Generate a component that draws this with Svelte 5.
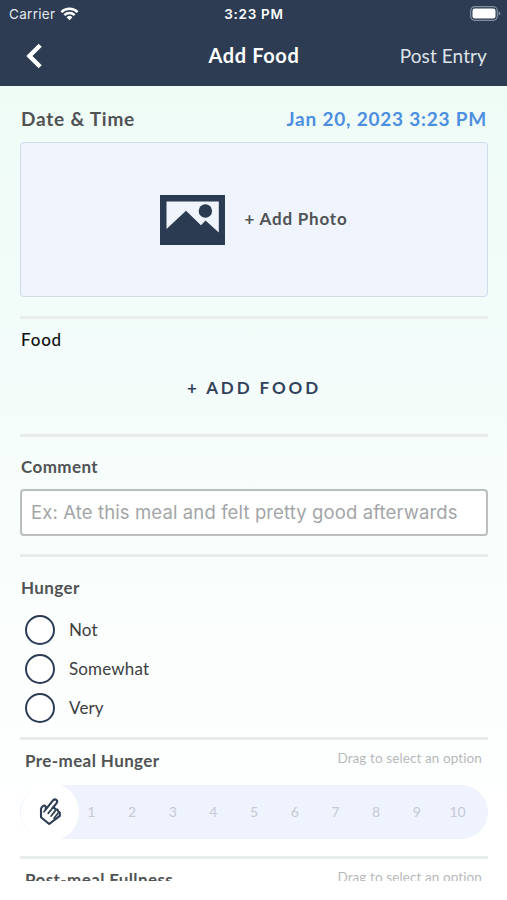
<script lang="ts">
	const hungerOptions = ['Not', 'Somewhat', 'Very'];
	const levels = Array.from({ length: 10 }, (_, i) => i + 1);

	let hunger = $state('');
	let comment = $state('');
</script>

<div class="screen">
	<header>
		<div class="status">
			<div class="carrier">
				<span>Carrier</span>
				<svg width="19" height="14" viewBox="0 0 20 15" fill="none" stroke="#fff" stroke-width="2.7">
					<path d="M1.3 5.4a12.3 12.3 0 0 1 17.4 0" />
					<path d="M4.5 8.7a7.8 7.8 0 0 1 11 0" />
					<path d="M10 14.2 6.9 11a4.4 4.4 0 0 1 6.2 0z" fill="#fff" stroke="none" />
				</svg>
			</div>
			<span class="clock">3:23 PM</span>
			<svg class="battery" width="31" height="15" viewBox="0 0 31 15">
				<rect x="0.7" y="0.7" width="26.6" height="13.6" rx="4" fill="none" stroke="#8490a0" stroke-width="1.2" />
				<rect x="2.5" y="2.5" width="23" height="10" rx="2.2" fill="#fff" />
				<path d="M28.6 5.2q1.7.8 1.7 2.3t-1.7 2.3z" fill="#8490a0" />
			</svg>
		</div>
		<nav>
			<button class="back" aria-label="Back">
				<svg width="18" height="26" viewBox="0 0 18 26" fill="none" stroke="#fff" stroke-width="4.4">
					<path d="M15.2 2.2 4.4 13l10.8 10.8" />
				</svg>
			</button>
			<h1>Add Food</h1>
			<button class="post">Post Entry</button>
		</nav>
	</header>

	<main>
		<section class="date">
			<h2>Date &amp; Time</h2>
			<span class="when">Jan 20, 2023 3:23 PM</span>
		</section>

		<button class="photo">
			<svg width="65" height="50" viewBox="0 0 65 50">
				<path d="M0 0h65v50H0z" fill="#2b3b52" />
				<path d="M6.5 6.5h52.3v31L45.5 25.4 41 30.3 26 15.8 6.5 34z" fill="#eff4fd" />
				<circle cx="45.4" cy="16" r="6.7" fill="#2b3b52" />
			</svg>
			<span>+ Add Photo</span>
		</button>

		<section class="food">
			<h3>Food</h3>
			<button class="add-food">+ ADD FOOD</button>
		</section>

		<section class="comment">
			<h3>Comment</h3>
			<input bind:value={comment} placeholder="Ex: Ate this meal and felt pretty good afterwards" />
		</section>

		<section class="hunger">
			<h3>Hunger</h3>
			{#each hungerOptions as option}
				<label>
					<input type="radio" name="hunger" value={option} bind:group={hunger} />
					<span>{option}</span>
				</label>
			{/each}
		</section>

		<section class="scale">
			<div class="scale-head">
				<h3>Pre-meal Hunger</h3>
				<span class="hint">Drag to select an option</span>
			</div>
			<div class="track">
				<div class="thumb">
					<svg width="24" height="30" viewBox="0 0 24 30" fill="none" stroke="#2b3b52" stroke-width="2.1" stroke-linejoin="round" stroke-linecap="round">
						<path d="M7.8 12.3 15.2 3.2c2-2 5 .2 3.6 2.6L14.6 11l1.6-.2 1.5 1.4 1.7.4.8 1.7 1.6 1.2v3.4l-10.6 8.1-8.2-6.8V12.3c0-1.6 1-2.6 2.2-3.4 1.2-.8 2.6-.2 2.6 1.3z" />
						<path d="m14.6 11-4.4 5.4M17.6 13.4l-4.5 5.6M20 16.2l-4 5M7.8 12.3 6 14.8" stroke-width="1.7" />
					</svg>
				</div>
				<div class="levels">
					{#each levels as level}
						<span>{level}</span>
					{/each}
				</div>
			</div>
		</section>

		<section class="scale">
			<div class="scale-head">
				<h3>Post-meal Fullness</h3>
				<span class="hint">Drag to select an option</span>
			</div>
		</section>
	</main>
</div>

<style>
	:global(body) {
		background: #fff;
	}

	.screen {
		height: 900px;
		overflow: hidden;
		box-sizing: border-box;
		font-family: Lato, 'Open Sans', sans-serif;
		font-variant-ligatures: none;
		color: #505354;
	}

	button {
		border: 0;
		padding: 0;
		background: none;
		font: inherit;
		font-variant-ligatures: none;
		color: inherit;
		cursor: pointer;
	}

	h1,
	h2,
	h3 {
		margin: 0;
		white-space: nowrap;
	}

	header {
		height: 86px;
		background: #2d3c52;
		color: #fff;
	}

	.status {
		display: grid;
		grid-template-columns: 1fr auto 1fr;
		align-items: center;
		height: 27px;
		padding: 0 6px 0 9px;
		font-family: Inter, sans-serif;
		font-size: 13.5px;
	}

	.carrier {
		display: flex;
		align-items: center;
		gap: 5px;
		color: #e4e9ef;
		letter-spacing: 0.3px;
	}

	.clock {
		padding-right: 2px;
		font-weight: 600;
		font-size: 13.5px;
		letter-spacing: 0.7px;
	}

	.battery {
		justify-self: end;
	}

	nav {
		display: grid;
		grid-template-columns: 1fr auto 1fr;
		align-items: center;
		height: 58px;
		padding: 0 20px 0 25px;
	}

	.back {
		display: flex;
	}

	h1 {
		padding: 0 4px 2px 0;
		font-size: 20px;
		font-weight: 700;
		letter-spacing: 0.6px;
	}

	.post {
		justify-self: end;
		padding-bottom: 2px;
		font-size: 19px;
		letter-spacing: 0.1px;
		color: #dde3ea;
	}

	main {
		display: flex;
		flex-direction: column;
		height: 795px;
		box-sizing: border-box;
		padding: 0 19px 0 20px;
		overflow: hidden;
		background: linear-gradient(#effcf6, #f3fcfa 34%, #fafefd 66%, #fff 95%);
	}

	main > * {
		flex: none;
	}

	.date {
		display: flex;
		justify-content: space-between;
		align-items: center;
		height: 48px;
		padding: 8px 1px 0 1px;
	}

	h2,
	.when {
		font-size: 19px;
		font-weight: 700;
		letter-spacing: 0.78px;
	}

	.when {
		color: #4c8fe0;
	}

	.photo {
		display: flex;
		align-items: center;
		justify-content: center;
		gap: 20px;
		height: 155px;
		padding-right: 1px;
		margin-bottom: 19px;
		border: 1.5px solid #cfdcec;
		border-radius: 4px;
		background: #eff4fd;
		font-size: 17px;
		font-weight: 700;
		letter-spacing: 0.8px;
	}

	.photo span {
		padding-bottom: 2px;
	}

	h3 {
		padding-left: 1px;
		font-size: 17px;
		font-weight: 700;
		line-height: 20px;
		letter-spacing: 0.4px;
	}

	.food,
	.comment,
	.hunger,
	.scale {
		display: flex;
		flex-direction: column;
		box-sizing: border-box;
		border-top: 3px solid #e8ecec;
	}

	.food {
		height: 118px;
		padding-top: 11px;
	}

	.food h3 {
		color: #111;
		font-weight: 500;
		letter-spacing: 0.8px;
	}

	.add-food {
		height: 40px;
		margin-top: 17px;
		color: #33425b;
		font-size: 17px;
		font-weight: 700;
		letter-spacing: 2.9px;
	}

	.comment {
		height: 120px;
		padding-top: 20px;
	}

	.comment input {
		height: 47px;
		box-sizing: border-box;
		margin-top: 12px;
		padding: 0 9px 1px;
		border: 2px solid #bbbfbf;
		border-radius: 4px;
		background: #fff;
		font-family: Inter, sans-serif;
		font-size: 18.5px;
		letter-spacing: 0.12px;
		outline: none;
	}

	.comment input::placeholder {
		color: #a3a5a7;
		opacity: 1;
	}

	.hunger {
		height: 183px;
		padding-top: 21px;
	}

	.hunger h3 {
		margin-bottom: 12px;
	}

	label {
		display: flex;
		align-items: center;
		gap: 14px;
		height: 39px;
		padding-left: 5px;
		font-size: 17px;
		letter-spacing: 0.15px;
		color: #3c3e40;
	}

	label span {
		padding-bottom: 1px;
	}

	label input {
		appearance: none;
		width: 30px;
		height: 30px;
		margin: 0;
		border: 2px solid #2b3b55;
		border-radius: 50%;
		background: #fff;
	}

	label input:checked {
		background: #2b3b55;
		box-shadow: inset 0 0 0 5px #fff;
	}

	.scale {
		height: 119px;
	}

	.scale-head {
		display: flex;
		justify-content: space-between;
		padding: 11px 6px 0 4px;
		height: 34px;
	}

	.hint {
		font-size: 13.5px;
		line-height: 15px;
		letter-spacing: 0.1px;
		color: #b7b9bb;
	}

	.track {
		display: flex;
		align-items: center;
		height: 54px;
		padding-left: 1px;
		border-radius: 27px;
		background: #eff3fd;
	}

	.thumb {
		display: flex;
		align-items: center;
		justify-content: center;
		width: 58px;
		height: 58px;
		border-radius: 50%;
		background: #fff;
	}

	.levels {
		flex: 1;
		display: grid;
		grid-template-columns: repeat(10, 40.7px);
		margin-left: -8px;
		padding-bottom: 2px;
		text-align: center;
		font-size: 14px;
		color: #c5cad4;
	}
</style>
